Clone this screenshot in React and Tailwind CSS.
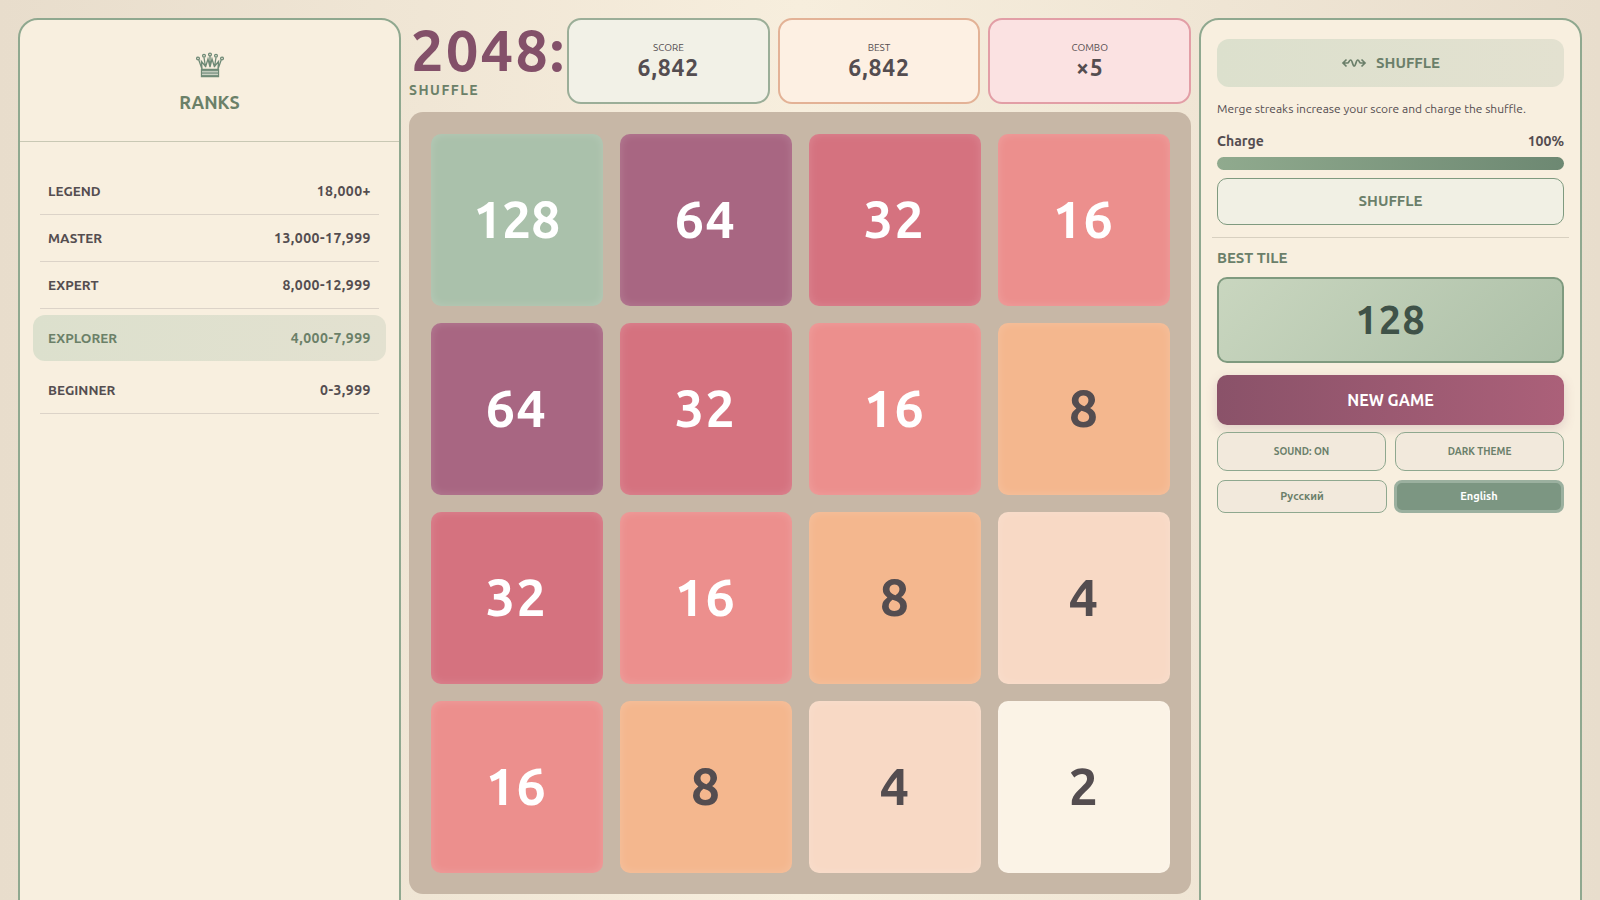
const F = '[font-family:"Ubuntu","Lato",sans-serif]';
const tiles = [128, 64, 32, 16, 64, 32, 16, 8, 32, 16, 8, 4, 16, 8, 4, 2];
const glow = "shadow-[inset_0_0_10px_rgba(255,255,255,0.16)]";
const tileClass = {
  128: "bg-[#aac1ab] text-white tracking-[-0.5px]",
  64: "bg-[#a86682] text-white tracking-[1.5px]",
  32: "bg-[#d5727f] text-white tracking-[1.5px]",
  16: "bg-[#ec8f8d] text-white tracking-[1.5px]",
  8: "bg-[#f4b78e] text-[#544d50]",
  4: "bg-[#f8d9c5] text-[#544d50]",
  2: "bg-[#fbf3e6] text-[#544d50]",
};
const ranks = [["LEGEND", "18,000+"], ["MASTER", "13,000-17,999"], ["EXPERT", "8,000-12,999"]];

function Crown() {
  return (
    <svg width="28" height="26" viewBox="0 0 28 26" fill="none" stroke="#6f8a76" strokeWidth="1.3">
      <circle cx="2" cy="6.500" r="1.4" /><circle cx="8" cy="3.800" r="1.4" /><circle cx="14" cy="2.500" r="1.4" /><circle cx="20" cy="3.800" r="1.4" /><circle cx="26" cy="6.500" r="1.4" />
      <path d="M2.800 8 6 17M8 5.500 9.500 15 M14 4v11M20 5.500 18.500 15M25.200 8 22 17M6 17 5.500 9.500 10 15M22 17l.5-7.500L18 15M9.500 15 12 7l2 8 2-8 2.500 8" />
      <path d="M5.500 17.500h17v7h-17z" fill="#7d9585" />
      <path d="M6 19.800h16M6 22.300h16" stroke="#dfe2d2" strokeWidth="1" />
    </svg>
  );
}

function Wave() {
  return (
    <svg width="26" height="12" viewBox="0 0 26 12" fill="none" stroke="#6b7f6a" strokeWidth="1.7">
      <path d="M5.500 2.500 2 6l3.500 3.500M20.500 2.500 24 6l-3.500 3.500M2 6h4.500c1.500 0 1.500-3 3.200-3s1.800 6 3.500 6 1.800-6 3.500-6 1.500 3 3 3H24" />
    </svg>
  );
}

function Stat({ label, value, cls }) {
  return (
    <div className={`flex-1 h-[86px] rounded-[14px] border-2 flex flex-col items-center justify-center pt-[2px] ${cls}`}>
      <span className="text-[10px] leading-[12px] text-[#544d50]">{label}</span>
      <span className="text-[23px] leading-[28px] font-bold text-[#544d50] tracking-[0.8px]">{value}</span>
    </div>
  );
}

function Row({ name, range, cls }) {
  return (
    <div className={`flex items-center justify-between font-bold ${cls}`}>
      <span className="text-[13.5px]">{name}</span><span className="text-[14px] tracking-[0.5px]">{range}</span>
    </div>
  );
}

export default function App() {
  return (
    <div className={`h-[900px] overflow-hidden bg-[linear-gradient(90deg,#e8ddcc_0%,#f7eedd_50%,#e8ddcc_100%)] pt-[18px] px-[18px] grid grid-cols-[383px_782px_383px] gap-x-[8px] ${F}`}>
      <aside className="h-[920px] bg-[#f8efdf] border-2 border-[#8fa88f] rounded-[20px]">
        <div className="h-[122px] border-b border-[#c9c8b4] flex flex-col items-center pt-[32px]">
          <Crown />
          <div className="mt-[12px] text-[18px] leading-[24px] font-bold text-[#6b8068]">RANKS</div>
        </div>
        <div className="px-[20px] pt-[26px]">
          {ranks.map(([a, b]) => (
            <Row key={a} name={a} range={b} cls="h-[47px] border-b border-[#dcd3c8] px-[8px] text-[#544d50]" />
          ))}
          <Row name="EXPLORER" range="4,000-7,999" cls="-mx-[7px] my-[6px] h-[46px] rounded-[12px] px-[15px] bg-[linear-gradient(90deg,#dce0cd,#e3e1d0)] text-[#6b8068]" />
          <Row name="BEGINNER" range="0-3,999" cls="h-[47px] border-b border-[#dcd3c8] px-[8px] text-[#544d50]" />
        </div>
      </aside>

      <main>
        <div className="flex h-[86px] gap-x-[8px]">
          <div className="w-[150px] shrink-0 flex flex-col">
            <div className="text-[58px] leading-[64px] font-bold text-[#835069] tracking-[2px] whitespace-nowrap pl-[2px]">2048:</div>
            <div className="text-[14px] leading-[16px] font-bold text-[#6b8068] tracking-[1.5px]">SHUFFLE</div>
          </div>
          <Stat label="SCORE" value="6,842" cls="bg-[#f2f1e7] border-[#9bae98]" />
          <Stat label="BEST" value="6,842" cls="bg-[#fdf0e3] border-[#e3b296]" />
          <Stat label="COMBO" value="×5" cls="bg-[#fbe2e2] border-[#e29ea6]" />
        </div>
        <div className="mt-[8px] w-[782px] h-[782px] bg-[#c7b7a6] rounded-[14px] p-[21.5px] grid grid-cols-4 grid-rows-4 gap-[17px]">
          {tiles.map((t, i) => (
            <div key={i} className={`rounded-[10px] flex items-center justify-center text-[52px] font-bold pb-[2px] ${glow} ${tileClass[t]}`}>{t}</div>
          ))}
        </div>
      </main>

      <aside className="h-[920px] bg-[#f8efdf] border-2 border-[#8fa88f] rounded-[20px] px-[16px] pt-[19px]">
        <div className="h-[48px] rounded-[12px] bg-[linear-gradient(90deg,#dce0cd,#e3e1d0)] flex items-center justify-center gap-[9px] text-[15px] font-bold text-[#6b7f6a]">
          <Wave /><span>SHUFFLE</span>
        </div>
        <p className="mt-[14px] text-[12px] leading-[16px] text-[#544d50]">Merge streaks increase your score and charge the shuffle.</p>
        <div className="mt-[15px] flex justify-between text-[14px] leading-[18px] font-bold text-[#544d50]"><span>Charge</span><span>100%</span></div>
        <div className="mt-[7px] h-[13px] rounded-full bg-[linear-gradient(90deg,#90aa8e,#6d8872)]" />
        <div className="mt-[8px] h-[47px] rounded-[10px] border border-[#7f9a7f] bg-[#f1f0e4] flex items-center justify-center text-[15px] font-bold text-[#6b7f6a]">SHUFFLE</div>
        <div className="-mx-[5px] mt-[12px] border-t border-[#d8d0c0]" />
        <div className="mt-[11px] text-[15px] leading-[18px] font-bold text-[#6b7f6a]">BEST TILE</div>
        <div className="mt-[10px] h-[86px] rounded-[10px] border-2 border-[#7f9a7f] bg-[linear-gradient(135deg,#c9d6bf,#adc0a8)] flex items-center justify-center text-[40px] font-bold text-[#3f5248] tracking-[1px]">128</div>
        <div className="mt-[12px] h-[50px] rounded-[10px] bg-[linear-gradient(90deg,#8a5269,#ab6079)] shadow-[0_4px_12px_rgba(131,80,105,0.2)] flex items-center justify-center text-[16px] font-bold text-white">NEW GAME</div>
        <div className="mt-[7px] grid grid-cols-2 gap-[9px]">
          <div className="h-[39px] rounded-[10px] border border-[#8fa88f] bg-[#f2e9dc] flex items-center justify-center text-[10px] font-bold text-[#6b7f6a]">SOUND: ON</div>
          <div className="h-[39px] rounded-[10px] border border-[#8fa88f] bg-[#f2e9dc] flex items-center justify-center text-[10px] font-bold text-[#6b7f6a]">DARK THEME</div>
        </div>
        <div className="mt-[9px] grid grid-cols-2 gap-[7px]">
          <div className="h-[33px] rounded-[8px] border border-[#8fa88f] bg-[#f2e9dc] flex items-center justify-center text-[11px] font-bold text-[#6b7f6a]">Русский</div>
          <div className="h-[33px] rounded-[8px] border-[3px] border-[#9bb09f] bg-[#7c9682] flex items-center justify-center text-[11px] font-bold text-white">English</div>
        </div>
      </aside>
    </div>
  );
}
